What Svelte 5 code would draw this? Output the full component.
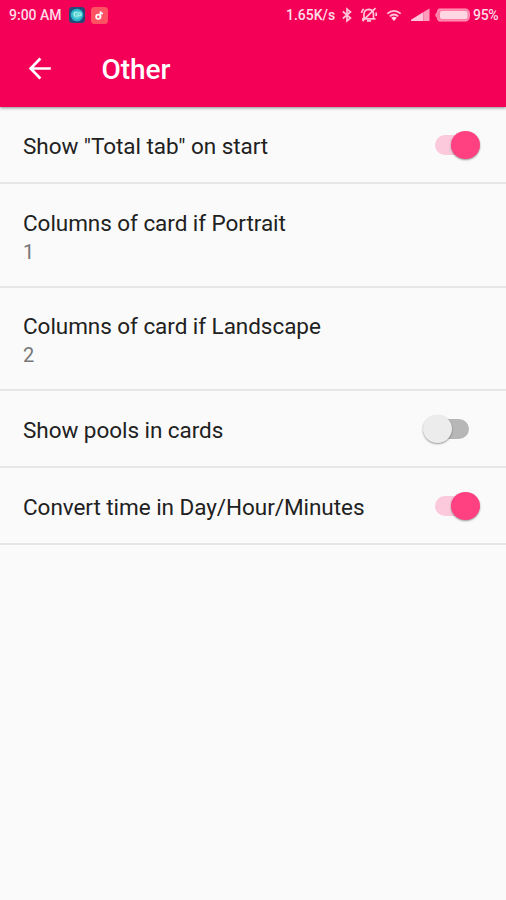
<script>
  const rows = [
    { title: 'Show "Total tab" on start', on: true, height: 77 },
    { title: 'Columns of card if Portrait', value: '1', height: 104 },
    { title: 'Columns of card if Landscape', value: '2', height: 103 },
    { title: 'Show pools in cards', on: false, height: 77 },
    { title: 'Convert time in Day/Hour/Minutes', on: true, height: 77 }
  ];
</script>

<div class="screen">
  <header>
    <div class="status">
      <span class="time">9:00 AM</span>
      <svg class="app-one" width="16" height="16" viewBox="0 0 16 16">
        <rect width="16" height="16" rx="3.5" fill="#254b78" />
        <circle cx="8" cy="8" r="6.3" fill="#29b5c9" />
        <path d="M3 6.5Q7 2 12 5L13 9Q9 14 5 11Z" fill="#58cfd4" />
        <path d="M8 5.5H5.5V9H8M9 10V6H12V8.5H9" fill="none" stroke="#a4eee8" stroke-width="1.2" />
      </svg>
      <svg class="app-two" width="17" height="17" viewBox="0 0 17 17">
        <rect width="17" height="17" rx="3.5" fill="#ff5263" />
        <circle cx="7.3" cy="9.8" r="2.2" fill="none" stroke="#fff" stroke-width="1.7" />
        <path d="M9.4 10V4.5Q9.8 6.5 12 6.7" fill="none" stroke="#fff" stroke-width="1.6" />
      </svg>
      <span class="fill"></span>
      <span class="speed">1.65K/s</span>
      <svg class="bluetooth" width="12" height="16" viewBox="0 0 12 16">
        <path d="M1.8 4.5L9.5 11L6 14V2L9.5 5L1.8 11.5" />
      </svg>
      <svg class="mute" width="18" height="18" viewBox="0 0 18 18">
        <path d="M2 12.8H15.5M4 12V8.2Q4.2 3.7 9 3.4Q13.5 4 13.5 8V12L15 13M7 14.8H11M2.5 15.2L15.5 2.2M1.5 7Q1.7 4.5 3.7 2.8M16.2 10V6.5" />
      </svg>
      <svg class="wifi" width="16" height="14" viewBox="0 0 16 14">
        <path d="M1.3 5.7Q8 0 14.7 5.7M3.8 8.3Q8 4.7 12.2 8.3" />
        <path class="solid" d="M5.2 9.7Q8 7.8 10.8 9.7L8 12.9Z" />
      </svg>
      <svg class="signal" width="19" height="14" viewBox="0 0 19 14">
        <path d="M0 13V11.7L12.5 4V13Z" fill="#ffc4d7" />
        <path d="M12.5 13V4L18.5 0.5V13Z" fill="#ff9bbb" />
      </svg>
      <svg class="battery" width="36" height="14" viewBox="0 0 36 14">
        <path d="M4 1H31Q34.5 1 34.5 7T31 13H4Q2.5 13 2.5 9.5L1 8.5V5.5L2.5 4.5Q2.5 1 4 1Z" fill="#ff7ea6" stroke="#ff9dbc" />
        <rect x="5" y="3" width="27.5" height="8" rx="2" fill="#ffd6e2" />
      </svg>
      <span class="percent">95%</span>
    </div>
    <div class="bar">
      <svg width="24" height="26" viewBox="0 0 24 26">
        <path d="M22.8 12.5H2.6M12.4 2.5L2.6 12.5L12.4 22.5" fill="none" stroke="#fff" stroke-width="2.7" />
      </svg>
      <h1>Other</h1>
    </div>
  </header>
  <main>
    {#each rows as row}
      <section style:height={`${row.height}px`}>
        <div class="copy">
          <div class="title">{row.title}</div>
          {#if row.value}<div class="value">{row.value}</div>{/if}
        </div>
        {#if row.on !== undefined}
          <div class="toggle" class:on={row.on}><span class="thumb"></span></div>
        {/if}
      </section>
    {/each}
  </main>
</div>

<style>
  .screen { width: 506px; height: 900px; overflow: hidden; background: #fafafa; font-family: Roboto, sans-serif; }
  header { position: relative; height: 107px; background: #f50057; color: #fff; box-shadow: 0 1px 3px rgb(0 0 0 / 45%); }
  .status { height: 30px; display: flex; align-items: center; padding: 0 7px 0 9px; box-sizing: border-box; font-size: 14px; font-weight: 500; color: #ffdce7; white-space: nowrap; }
  .time { width: 60px; }
  .app-two { margin-left: 6px; }
  .fill { flex: 1; }
  .speed { width: 55px; }
  .bluetooth, .mute, .wifi { fill: none; stroke: #ffc4d7; stroke-width: 1.7; }
  .wifi .solid { fill: #ffdce7; stroke: none; }
  .mute { margin-left: 7px; }
  .wifi { margin-left: 8px; }
  .signal { margin-left: 9px; }
  .battery { margin-left: 5px; }
  .percent { width: 26px; margin-left: 2px; letter-spacing: -.3px; }
  .status svg { flex: none; }
  .bar { height: 77px; display: flex; align-items: center; padding-left: 28px; }
  h1 { margin: 2px 0 0 49.5px; font-size: 28px; letter-spacing: -.05px; line-height: 32px; font-weight: 500; }
  section { display: flex; align-items: center; justify-content: space-between; box-sizing: border-box; padding: 0 37px 0 23px; border-bottom: 2px solid #e6e6e6; }
  .copy { padding-top: 2px; }
  .title { font-size: 22.5px; letter-spacing: -.05px; line-height: 28px; color: #212121; white-space: nowrap; }
  .value { font-size: 20px; line-height: 24px; padding-top: 3px; color: #777; }
  .toggle { position: relative; width: 34px; height: 20px; border-radius: 10px; background: #b7b7b7; }
  .thumb { position: absolute; left: -12px; top: -4px; width: 29px; height: 28px; border-radius: 50%; background: #ececec; box-shadow: 0 1px 2px rgb(0 0 0 / 40%); }
  .on { background: #fcc8dc; }
  .on .thumb { left: 16px; background: #ff4081; }
</style>
